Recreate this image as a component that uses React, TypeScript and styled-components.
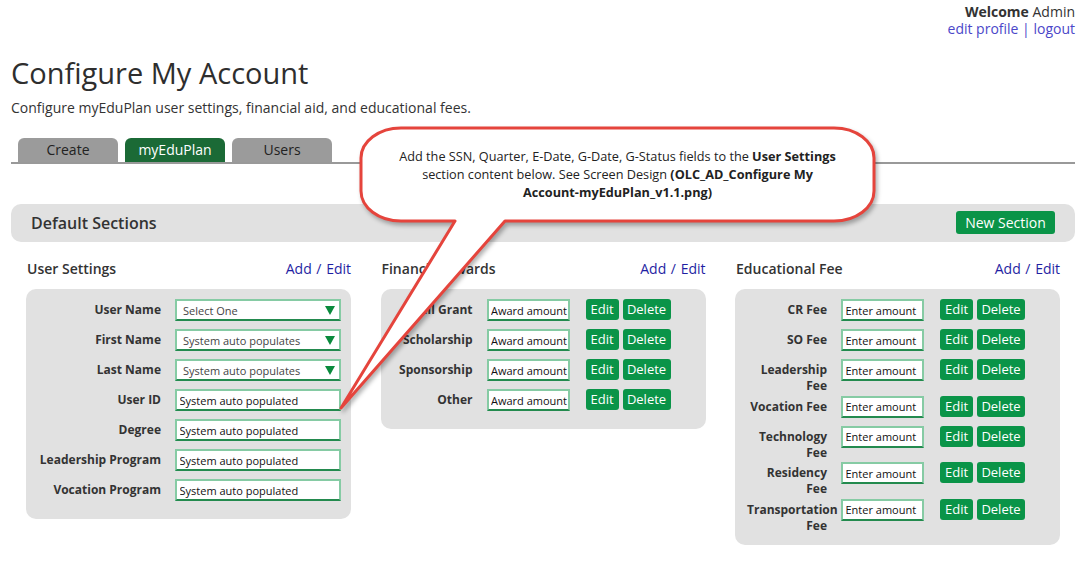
import React from "react";
import styled, { createGlobalStyle } from "styled-components";

const GlobalStyle = createGlobalStyle`
  html, body { margin: 0; padding: 0; background: #fff; }
  body { font-family: "Open Sans", "Noto Sans", Arial, sans-serif; color: #333; }
  * { box-sizing: border-box; }
`;

const Page = styled.div`
  position: relative;
  width: 1085px;
  min-height: 565px;
  padding: 3px 10px 20px 11px;
`;

const TopBar = styled.div`
  display: flex;
  flex-direction: column;
  align-items: flex-end;
  font-size: 14px;
  line-height: 17px;
`;

const Welcome = styled.div`
  color: #333;
  b { font-weight: 700; }
`;

const UserLinks = styled.div`
  color: #4b47c9;
  a { color: inherit; text-decoration: none; }
`;

const Title = styled.h1`
  margin: 19px 0 0;
  font-size: 29px;
  line-height: 34.8px;
  font-weight: 400;
  color: #2e2e2e;
`;

const Subtitle = styled.p`
  margin: 8px 0 0;
  font-size: 14px;
  line-height: 17px;
  color: #333;
`;

const TabBar = styled.div`
  display: flex;
  gap: 7px;
  padding-left: 7px;
  margin-top: 22px;
  border-bottom: 2px solid #999;
`;

const Tab = styled.div<{ $active?: boolean }>`
  width: 100px;
  height: 24px;
  border-radius: 6px 6px 0 0;
  background: ${(p) => (p.$active ? "#1b6a36" : "#9b9b9b")};
  color: ${(p) => (p.$active ? "#fff" : "#222")};
  font-size: 14px;
  line-height: 24px;
  text-align: center;
`;

const SectionBar = styled.div`
  margin-top: 40px;
  height: 38px;
  border-radius: 10px;
  background: #e1e1e1;
  display: flex;
  align-items: center;
  justify-content: space-between;
  padding: 0 20px;
`;

const SectionTitle = styled.h2`
  margin: 0;
  font-size: 16px;
  font-weight: 600;
  color: #333;
`;

const GreenButton = styled.button<{ $w: number; $h: number; $size: number }>`
  width: ${(p) => p.$w}px;
  height: ${(p) => p.$h}px;
  flex: none;
  padding: 0;
  border: none;
  border-radius: 3px;
  background: #0a9448;
  color: #fff;
  font-family: inherit;
  font-size: ${(p) => p.$size}px;
  line-height: ${(p) => p.$h}px;
  text-align: center;
`;

const Columns = styled.div`
  display: grid;
  grid-template-columns: repeat(3, 325px);
  column-gap: 29.5px;
  padding-left: 15px;
  margin-top: 17.5px;
  align-items: start;
`;

const ColumnHead = styled.div`
  display: flex;
  justify-content: space-between;
  align-items: baseline;
  height: 20px;
  padding-left: 1px;
`;

const ColumnTitle = styled.h3`
  margin: 0;
  font-size: 14px;
  line-height: 20px;
  font-weight: 650;
  color: #333;
`;

const HeadLinks = styled.div`
  font-size: 14px;
  line-height: 20px;
  color: #1f1fa3;
  word-spacing: 1px;
  a { color: inherit; text-decoration: none; }
`;

const Panel = styled.div`
  margin-top: 10px;
  background: #e1e1e1;
  border-radius: 10px;
  padding: 10px 10px 10px 12px;
`;

const FieldRow = styled.div`
  display: flex;
  align-items: flex-start;
`;

const FieldLabel = styled.label<{ $w: number }>`
  width: ${(p) => p.$w}px;
  flex: none;
  margin-right: 14px;
  padding: 3px 0 1.5px;
  text-align: right;
  font-size: 12px;
  font-weight: 700;
  line-height: 16px;
  color: #333;
`;

const fieldBox = `
  height: 22px;
  margin-bottom: 8px;
  flex: none;
  border: 2px solid #86cba4;
  border-bottom-color: #238a4e;
  background: #fff;
  font-family: "Open Sans", "Noto Sans", Arial, sans-serif;
  font-size: 11px;
`;

const TextInput = styled.input<{ $w: number }>`
  ${fieldBox}
  width: ${(p) => p.$w}px;
  padding: 0 0 0 2.5px;
  color: #111;
  outline: none;
`;

const SelectBox = styled.div<{ $w: number }>`
  ${fieldBox}
  width: ${(p) => p.$w}px;
  display: flex;
  align-items: center;
  justify-content: space-between;
  padding: 0 4px 0 6px;
  color: #444;
`;

const Actions = styled.div`
  display: flex;
  gap: 4px;
  margin-left: 16px;
`;

const Callout = styled.div`
  position: absolute;
  left: 336px;
  top: 122px;
  width: 548px;
  height: 292px;
  pointer-events: none;
`;

const CalloutShape = styled.svg`
  position: absolute;
  left: 0;
  top: 0;
  overflow: visible;
  filter: drop-shadow(2px 3px 2px rgba(0, 0, 0, 0.3));
`;

const CalloutText = styled.div`
  position: absolute;
  left: 25px;
  top: 25px;
  width: 513px;
  text-align: center;
  font-size: 12.7px;
  line-height: 18px;
  color: #222;
  b { font-weight: 700; }
`;

const Arrow = () => (
  <svg width="10" height="10" viewBox="0 0 10 10">
    <polygon points="0,1 10,1 5,10" fill="#0a8a3c" />
  </svg>
);

type Row = { label: string; kind: "select" | "text"; value: string };

const userRows: Row[] = [
  { label: "User Name", kind: "select", value: "Select One" },
  { label: "First Name", kind: "select", value: "System auto populates" },
  { label: "Last Name", kind: "select", value: "System auto populates" },
  { label: "User ID", kind: "text", value: "System auto populated" },
  { label: "Degree", kind: "text", value: "System auto populated" },
  { label: "Leadership Program", kind: "text", value: "System auto populated" },
  { label: "Vocation Program", kind: "text", value: "System auto populated" },
];

const awards = ["Pell Grant", "Scholarship", "Sponsorship", "Other"];
const fees = [
  "CR Fee",
  "SO Fee",
  "Leadership Fee",
  "Vocation Fee",
  "Technology Fee",
  "Residency Fee",
  "Transportation Fee",
];

const ColumnHeader = ({ title }: { title: string }) => (
  <ColumnHead>
    <ColumnTitle>{title}</ColumnTitle>
    <HeadLinks>
      <a href="#">Add</a> / <a href="#">Edit</a>
    </HeadLinks>
  </ColumnHead>
);

const AmountRow = ({ label, placeholder }: { label: string; placeholder: string }) => (
  <FieldRow>
    <FieldLabel $w={80}>{label}</FieldLabel>
    <TextInput $w={83} readOnly value={placeholder} />
    <Actions>
      <GreenButton $w={33} $h={21} $size={13}>Edit</GreenButton>
      <GreenButton $w={48} $h={21} $size={13}>Delete</GreenButton>
    </Actions>
  </FieldRow>
);

export default function App() {
  return (
    <Page>
      <GlobalStyle />
      <TopBar>
        <Welcome>
          <b>Welcome</b> Admin
        </Welcome>
        <UserLinks>
          <a href="#">edit profile</a> | <a href="#">logout</a>
        </UserLinks>
      </TopBar>
      <Title>Configure My Account</Title>
      <Subtitle>Configure myEduPlan user settings, financial aid, and educational fees.</Subtitle>
      <TabBar>
        <Tab>Create</Tab>
        <Tab $active>myEduPlan</Tab>
        <Tab>Users</Tab>
      </TabBar>
      <SectionBar>
        <SectionTitle>Default Sections</SectionTitle>
        <GreenButton $w={99} $h={23} $size={14}>New Section</GreenButton>
      </SectionBar>
      <Columns>
        <div>
          <ColumnHeader title="User Settings" />
          <Panel>
            {userRows.map((r) => (
              <FieldRow key={r.label}>
                <FieldLabel $w={123}>{r.label}</FieldLabel>
                {r.kind === "select" ? (
                  <SelectBox $w={166}>
                    <span>{r.value}</span>
                    <Arrow />
                  </SelectBox>
                ) : (
                  <TextInput $w={166} readOnly value={r.value} />
                )}
              </FieldRow>
            ))}
          </Panel>
        </div>
        <div>
          <ColumnHeader title="Financial Awards" />
          <Panel>
            {awards.map((a) => (
              <AmountRow key={a} label={a} placeholder="Award amount" />
            ))}
          </Panel>
        </div>
        <div>
          <ColumnHeader title="Educational Fee" />
          <Panel>
            {fees.map((f) => (
              <AmountRow key={f} label={f} placeholder="Enter amount" />
            ))}
          </Panel>
        </div>
      </Columns>

      <Callout>
        <CalloutShape width="548" height="292" viewBox="0 0 548 292">
          <path
            d="M 65 6 H 498 A 40 30 0 0 1 538 36 V 69 A 40 30 0 0 1 498 99 H 169 L 5 286 L 119 99 H 65 A 40 30 0 0 1 25 69 V 36 A 40 30 0 0 1 65 6 Z"
            fill="#fff"
            stroke="#e5443c"
            strokeWidth="3"
            strokeLinejoin="round"
          />
        </CalloutShape>
        <CalloutText>
          Add the SSN, Quarter, E-Date, G-Date, G-Status fields to the <b>User Settings</b>
          <br />
          section content below. See Screen Design <b>(OLC_AD_Configure My</b>
          <br />
          <b>Account-myEduPlan_v1.1.png)</b>
        </CalloutText>
      </Callout>
    </Page>
  );
}
